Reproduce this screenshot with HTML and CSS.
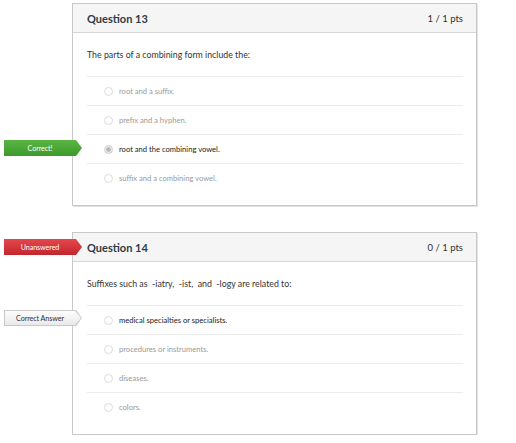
FILE: index.html
```html
<!DOCTYPE html>
<html>
<head>
<meta charset="utf-8">
<link rel="stylesheet" href="styles.css">
</head>
<body>
<div class="page">
  <div class="question">
    <div class="q-header">
      <span class="q-title">Question 13</span>
      <span class="q-pts">1 / 1 pts</span>
    </div>
    <div class="q-text">The parts of a combining form include the:</div>
    <ul class="answers">
      <li class="answer"><span class="radio"></span><span class="a-text">root and a suffix.</span></li>
      <li class="answer"><span class="radio"></span><span class="a-text">prefix and a hyphen.</span></li>
      <li class="answer selected"><span class="badge badge-correct">Correct!</span><span class="radio radio-on"></span><span class="a-text">root and the combining vowel.</span></li>
      <li class="answer"><span class="radio"></span><span class="a-text">suffix and a combining vowel.</span></li>
    </ul>
  </div>

  <div class="question">
    <div class="q-header">
      <span class="badge badge-unanswered">Unanswered</span>
      <span class="q-title">Question 14</span>
      <span class="q-pts">0 / 1 pts</span>
    </div>
    <div class="q-text">Suffixes such as &nbsp;-iatry, &nbsp;-ist, &nbsp;and &nbsp;-logy are related to:</div>
    <ul class="answers">
      <li class="answer selected"><span class="badge badge-answer"><span class="badge-label">Correct Answer</span></span><span class="radio"></span><span class="a-text">medical specialties or specialists.</span></li>
      <li class="answer"><span class="radio"></span><span class="a-text">procedures or instruments.</span></li>
      <li class="answer"><span class="radio"></span><span class="a-text">diseases.</span></li>
      <li class="answer"><span class="radio"></span><span class="a-text">colors.</span></li>
    </ul>
  </div>
</div>
</body>
</html>
```

FILE: styles.css
```css
html, body {
  margin: 0;
  padding: 0;
  background: #ffffff;
}
body {
  font-family: Lato, "Open Sans", "Liberation Sans", sans-serif;
  color: #2d3b45;
}
.page {
  padding-top: 3px;
  display: flex;
  flex-direction: column;
  gap: 26px;
}
.question {
  margin-left: 72px;
  width: 403px;
  border: 1px solid #c8c8c8;
  box-shadow: 1px 1px 0 #e2e2e2;
  background: #fff;
  padding-bottom: 13px;
}
.q-header {
  position: relative;
  height: 28px;
  background: #f5f5f5;
  border-bottom: 1px solid #d6d6d6;
  display: flex;
  align-items: center;
  justify-content: space-between;
  padding: 0 13px 0 14px;
}
.q-title {
  font-size: 11px;
  font-weight: 700;
  color: #2d3b45;
}
.q-pts {
  font-size: 9.5px;
  color: #333;
}
.q-text {
  height: 43px;
  box-sizing: border-box;
  padding: 16px 0 0 14px;
  font-size: 8.8px;
  line-height: 12px;
  color: #333;
}
.answers {
  list-style: none;
  margin: 0 13px 0 14px;
  padding: 0;
}
.answer {
  position: relative;
  height: 28px;
  border-top: 1px solid #ececec;
  display: flex;
  align-items: center;
  padding-left: 17px;
}
.radio {
  box-sizing: border-box;
  width: 9px;
  height: 9px;
  border-radius: 50%;
  border: 1px solid #dcdcdc;
  background: #fff;
  margin-right: 6px;
  flex: none;
}
.radio-on {
  border-color: #cfcfcf;
  background: radial-gradient(circle, #b8b8b8 0 2px, #ececec 2.5px);
}
.a-text {
  font-size: 7.6px;
  color: #9a9a9a;
}
.selected .a-text {
  color: #222;
}
.badge {
  position: absolute;
  left: -83px;
  top: 50%;
  margin-top: -9px;
  width: 78px;
  height: 16px;
  box-sizing: border-box;
  padding-right: 6px;
  display: flex;
  align-items: center;
  justify-content: center;
  font-size: 7.2px;
  color: #fff;
  letter-spacing: -0.1px;
  clip-path: polygon(0 0, calc(100% - 6px) 0, 100% 50%, calc(100% - 6px) 100%, 0 100%);
}
.badge-correct {
  background: linear-gradient(#5cb545, #3a9a29);
}
.badge-unanswered {
  left: -69px;
  margin-top: -8px;
  background: linear-gradient(#e4484d, #c2262c);
}
.badge-answer {
  margin-top: -10px;
  background: #c9c9c9;
  color: #333;
}
.badge-answer::before {
  content: "";
  position: absolute;
  inset: 1px;
  background: linear-gradient(#fdfdfd, #e9e9e9);
  clip-path: polygon(0 0, calc(100% - 6px) 0, 100% 50%, calc(100% - 6px) 100%, 0 100%);
}
.badge-label {
  position: relative;
}
```
